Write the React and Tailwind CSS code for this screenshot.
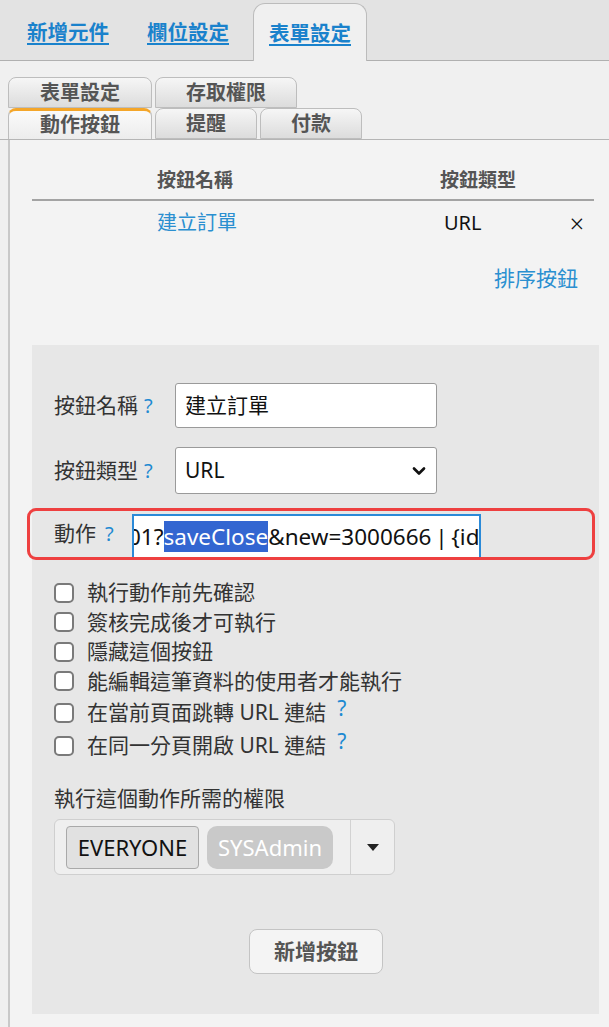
import React from "react";
import { ChevronDown } from "lucide-react";

const font = { fontFamily: '"Noto Sans", "Noto Sans CJK TC", sans-serif' };

function Help({ up = false, gap = "ml-[6px]" }) {
  return (
    <span
      className={`text-[#1e8ad2] ${up ? "relative -top-[4px] ml-[11px] text-[21px]" : `${gap} text-[20px]`}`}
    >
      ?
    </span>
  );
}

function SubTab({ label, w, active = false }) {
  return (
    <div
      className={`h-[31px] ${w} flex items-center justify-center rounded-t-[8px] border border-[#bdbdbd] text-[20px] font-bold text-[#555] leading-none ${
        active
          ? "border-t-[3px] border-t-[#f4a62a] bg-gradient-to-b from-[#fafafa] to-[#ececec] relative z-10 -mb-px border-b-0"
          : "bg-gradient-to-b from-[#f6f6f6] to-[#dcdcdc]"
      }`}
    >
      {label}
    </div>
  );
}

function Check({ label, help }) {
  return (
    <label className={`flex items-center ${help ? "h-[33px]" : "h-[29.5px]"}`}>
      <span className="w-[20px] h-[20px] rounded-[5px] border-2 border-[#7a7a7a] bg-white shrink-0" />
      <span className="ml-[13px] text-[21px] text-[#333] leading-none">
        {label}
        {help && <Help up />}
      </span>
    </label>
  );
}

export default function App() {
  const checks = [
    { label: "執行動作前先確認" },
    { label: "簽核完成後才可執行" },
    { label: "隱藏這個按鈕" },
    { label: "能編輯這筆資料的使用者才能執行" },
    { label: "在當前頁面跳轉 URL 連結", help: true },
    { label: "在同一分頁開啟 URL 連結", help: true },
  ];

  return (
    <div style={font} className="w-[609px] h-[1027px] overflow-hidden bg-[#f0f0f0]">
      {/* top tabs */}
      <div className="h-[61px] bg-[#e3e3e3] border-b border-[#b0b0b0] flex items-end">
        <a className="ml-[27px] mb-[12px] text-[20.5px] font-bold text-[#1a82cc] underline underline-offset-[3px]">
          新增元件
        </a>
        <a className="ml-[38px] mb-[12px] text-[20.5px] font-bold text-[#1a82cc] underline underline-offset-[3px]">
          欄位設定
        </a>
        <div className="ml-[24px] -mb-px h-[58px] w-[114px] rounded-t-[12px] border border-b-0 border-[#bcbcbc] bg-[#f0f0f0] flex items-center justify-center">
          <span className="text-[20.5px] font-bold text-[#1a82cc] underline underline-offset-[3px] mt-[1px]">
            表單設定
          </span>
        </div>
      </div>

      {/* sub tabs */}
      <div className="pt-[16px]">
        <div className="pl-[8px] flex gap-[3px]">
          <SubTab label="表單設定" w="w-[144px]" />
          <SubTab label="存取權限" w="w-[142px]" />
        </div>
        <div className="pl-[8px] flex gap-[3px] border-b border-[#b5b5b5]">
          <SubTab label="動作按鈕" w="w-[144px]" active />
          <SubTab label="提醒" w="w-[102px]" />
          <SubTab label="付款" w="w-[102px]" />
        </div>
      </div>

      {/* panel */}
      <div className="ml-[8px] border-l-2 border-[#c9c9c9] bg-[#f3f3f3] pl-[22px] pr-[10px] pb-[13px] h-[900px]">
        <div className="pt-[22px] mr-[5px]">
          <div className="grid grid-cols-[125px_283px_1fr] h-[39px] items-center border-b-2 border-[#a3a3a3] text-[19px] font-bold text-[#555]">
            <span />
            <span>按鈕名稱</span>
            <span>按鈕類型</span>
          </div>
          <div className="grid grid-cols-[125px_283px_1fr] h-[44px] items-center text-[20px]">
            <span />
            <span className="text-[#2a8fd0]">建立訂單</span>
            <span className="flex items-center justify-between text-[#111]">
              <span className="ml-[4px]">URL</span>
              <span className="mr-[10px] text-[25px] font-light leading-none">×</span>
            </span>
          </div>
          <div className="flex justify-end h-[24px] mt-[22px] items-center pr-[16px]">
            <span className="text-[21px] text-[#2a8fd0]">排序按鈕</span>
          </div>
        </div>

        {/* form box */}
        <div className="mt-[54px] bg-[#e7e7e7] h-[669px] pl-[22px] pr-[18px] pt-[38px]">
          <div className="flex items-center">
            <span className="w-[121px] text-[21px] text-[#333]">
              按鈕名稱
              <Help />
            </span>
            <div className="w-[262px] h-[45px] bg-white border border-[#9a9a9a] rounded-[3px] flex items-center pl-[9px] text-[21px] text-[#111]">
              建立訂單
            </div>
          </div>

          <div className="flex items-center mt-[19px]">
            <span className="w-[121px] text-[21px] text-[#333]">
              按鈕類型
              <Help />
            </span>
            <div className="w-[262px] h-[47px] bg-white border border-[#9a9a9a] rounded-[3px] flex items-center justify-between pl-[9px] pr-[7px] text-[21px] text-[#111]">
              <span>URL</span>
              <ChevronDown size={20} strokeWidth={3.2} color="#111" />
            </div>
          </div>

          <div className="-ml-[27px] mr-[-14px] mt-[14px] h-[52px] rounded-[9px] border-[3px] border-[#ee4040] flex items-end pl-[24px]">
            <span className="w-[78px] self-center text-[21px] text-[#333]">
              動作
              <Help gap="ml-[9px]" />
            </span>
            <div className="w-[349px] h-[43px] border-2 border-b-0 border-[#2b8ad8] bg-white overflow-hidden whitespace-nowrap flex items-center text-[22.5px] text-[#111]">
              <span className="-ml-[6px]">
                01?
                <span className="bg-[#3366d1] text-white">saveClose</span>
                &amp;new=3000666{"\u2009|\u2009"}{"{"}id{"}"}
              </span>
            </div>
          </div>

          <div className="mt-[18px]">
            {checks.map((c) => (
              <Check key={c.label} label={c.label} help={c.help} />
            ))}
          </div>

          <div className="mt-[21px] text-[21px] text-[#333] leading-[30px]">
            執行這個動作所需的權限
          </div>

          <div className="mt-[6px] w-[341px] h-[56px] rounded-[6px] border border-[#cfcfcf] bg-[#efefef] flex items-center">
            <span className="ml-[11px] h-[43px] w-[133px] flex items-center justify-center rounded-[4px] border border-[#a9a9a9] bg-[#e1e1e1] text-[22px] text-[#111]">
              EVERYONE
            </span>
            <span className="ml-[8px] h-[43px] w-[126px] flex items-center justify-center rounded-[10px] bg-[#c9c9c9] text-[22px] text-white">
              SYSAdmin
            </span>
            <span className="ml-[17px] h-full border-l border-[#d2d2d2] flex-1 flex items-center justify-center">
              <svg width="14" height="9" viewBox="0 0 14 9">
                <path d="M1 1 L13 1 L7 8 Z" fill="#222" />
              </svg>
            </span>
          </div>

          <div className="mt-[54px] ml-[195px] w-[134px] h-[45px] rounded-[8px] border border-[#c4c4c4] bg-[#f4f4f4] flex items-center justify-center text-[21px] font-bold text-[#555]">
            新增按鈕
          </div>
        </div>
      </div>
    </div>
  );
}
